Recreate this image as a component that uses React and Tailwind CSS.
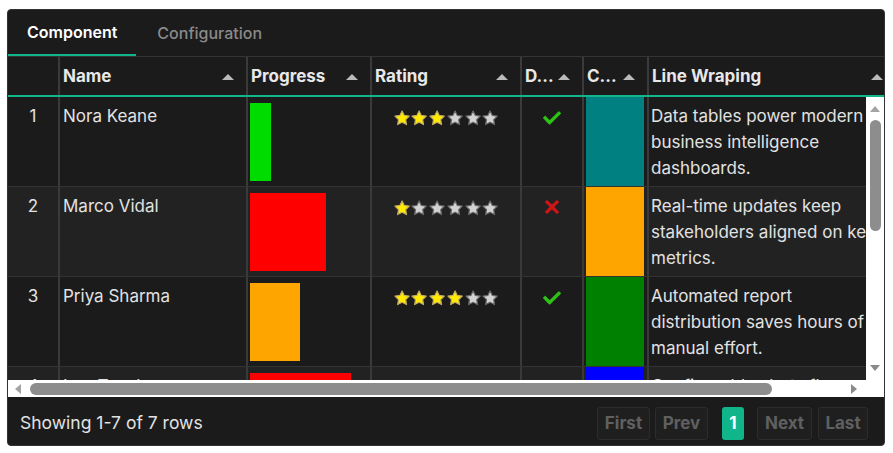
import React from 'react';

const rows = [
    { id: 1, name: 'Nora Keane', progress: 18, pcolor: 'bg-[#00dc00]', rating: 3, done: true, color: 'bg-[#008080]', text: 'Data tables power modern business intelligence dashboards.' },
    { id: 2, name: 'Marco Vidal', progress: 64, pcolor: 'bg-[#ff0000]', rating: 1, done: false, color: 'bg-[#ffa500]', text: 'Real-time updates keep stakeholders aligned on key metrics.' },
    { id: 3, name: 'Priya Sharma', progress: 42, pcolor: 'bg-[#ffa500]', rating: 4, done: true, color: 'bg-[#008000]', text: 'Automated report distribution saves hours of manual effort.' },
    { id: 4, name: 'Leo Tanaka', progress: 85, pcolor: 'bg-[#ff0000]', rating: 2, done: false, color: 'bg-[#0000ff]', text: 'Configurable alerts flag anomalies before they escalate.' },
    { id: 5, name: 'Sofia Brandt', progress: 55, pcolor: 'bg-[#ffa500]', rating: 5, done: true, color: 'bg-[#800080]', text: 'Column filters narrow large datasets in seconds.' },
    { id: 6, name: 'Omar Haddad', progress: 30, pcolor: 'bg-[#00dc00]', rating: 2, done: true, color: 'bg-[#ff0000]', text: 'Exported views can be shared across every team.' },
    { id: 7, name: 'Elena Petrova', progress: 92, pcolor: 'bg-[#ff0000]', rating: 6, done: false, color: 'bg-[#808000]', text: 'Frozen columns keep context while scrolling wide tables.' },
];

// sort arrow in header
const Arrow = () => (
    <span className="shrink-0 w-0 h-0 border-l-[6px] border-r-[6px] border-b-[6px] border-l-transparent border-r-transparent border-b-[#bbbbbb]" />
);

const Star = ({ on }) => (
    <svg width="16" height="16" viewBox="0 0 512 512">
        <polygon
            fill={on ? '#FFEA00' : '#D2D2D2'}
            stroke={on ? '#C1AB60' : '#686868'}
            strokeWidth="37.6152"
            strokeLinecap="round"
            strokeLinejoin="round"
            points="259.216,29.942 330.27,173.919 489.16,197.007 374.185,309.08 401.33,467.31 259.216,392.612 117.104,467.31 144.25,309.08 29.274,197.007 188.165,173.919"
        />
    </svg>
);

const Tick = () => (
    <svg width="18" height="18" viewBox="0 0 24 24">
        <path fill="#2DC214" fillRule="evenodd" d="M21.652,3.211c-0.293-0.295-0.77-0.295-1.061,0L9.41,14.34c-0.293,0.297-0.771,0.297-1.062,0L3.449,9.351C3.304,9.203,3.114,9.13,2.923,9.129C2.73,9.128,2.534,9.201,2.387,9.351l-2.165,1.946C0.078,11.445,0,11.63,0,11.823c0,0.194,0.078,0.397,0.223,0.544l4.94,5.184c0.292,0.296,0.771,0.776,1.062,1.07l2.124,2.141c0.292,0.293,0.769,0.293,1.062,0l14.366-14.34c0.293-0.294,0.293-0.777,0-1.071L21.652,3.211z" />
    </svg>
);

const Cross = () => (
    <svg width="16" height="16" viewBox="0 0 24 24">
        <path fill="#CE1515" d="M22.245,4.015c0.313,0.313,0.313,0.826,0,1.139l-6.276,6.27c-0.313,0.312-0.313,0.826,0,1.14l6.273,6.272c0.313,0.313,0.313,0.826,0,1.14l-2.285,2.277c-0.314,0.312-0.828,0.312-1.142,0l-6.271-6.271c-0.313-0.313-0.828-0.313-1.141,0l-6.276,6.267c-0.313,0.313-0.828,0.313-1.141,0l-2.282-2.28c-0.313-0.313-0.313-0.826,0-1.14l6.278-6.269c0.313-0.312,0.313-0.826,0-1.14L1.709,5.147c-0.314-0.313-0.314-0.827,0-1.14l2.284-2.278C4.308,1.417,4.821,1.417,5.135,1.73L11.405,8c0.314,0.314,0.828,0.314,1.141,0.001l6.276-6.267c0.312-0.312,0.826-0.312,1.141,0L22.245,4.015z" />
    </svg>
);

const HeadCell = ({ w, title, border = true }) => (
    <div className={`${w} shrink-0 h-full flex items-center pl-[3px] pr-[12px] pt-[2px] gap-[4px] ${border ? 'border-r-2 border-[#3a3a3a]' : ''}`}>
        <span className="flex-1 min-w-0 whitespace-nowrap overflow-hidden">{title}</span>
        <Arrow />
    </div>
);

const App = () => {
    return (
        <div className="w-[893px] h-[453px] bg-white pt-[9px] pl-[7px] font-[Inter,sans-serif]">
            <div className="w-[878px] h-[437px] rounded-[4px] border border-[#333333] bg-[#1b1b1b] overflow-hidden flex flex-col">
                {/* tabs */}
                <div className="h-[47px] shrink-0 flex border-b border-[#333333]">
                    <div className="h-full px-[19px] flex items-center border-b-2 border-[#10b58a] text-[16px] font-semibold text-white">
                        Component
                    </div>
                    <div className="h-full px-[21px] flex items-center text-[16px] font-medium text-[#8a8a8a]">
                        Configuration
                    </div>
                </div>

                {/* header */}
                <div className="h-[40px] shrink-0 border-b-2 border-[#10b58a] overflow-hidden">
                    <div className="w-[887px] h-full flex text-[17px] font-bold text-[#e8e8e8]">
                        <div className="w-[52px] shrink-0 h-full border-r-2 border-[#3a3a3a]" />
                        <HeadCell w="w-[188px]" title="Name" />
                        <HeadCell w="w-[124px]" title="Progress" />
                        <HeadCell w="w-[150px]" title="Rating" />
                        <HeadCell w="w-[62px]" title="D..." />
                        <HeadCell w="w-[65px]" title="C..." />
                        <HeadCell w="w-[246px]" title="Line Wraping" border={false} />
                    </div>
                </div>

                {/* body with scrollbars */}
                <div className="h-[283px] shrink-0 flex">
                    <div className="flex-1 min-w-0 overflow-hidden">
                        <div className="w-[887px] text-[17px] leading-[26px] text-[#e2e2e2]">
                            {rows.map((r, i) => (
                                <div key={r.id} className={`h-[90px] flex border-b border-[#333333] ${i % 2 ? 'bg-[#222222]' : 'bg-[#1b1b1b]'}`}>
                                    <div className="w-[52px] shrink-0 border-r-2 border-[#3a3a3a] pt-[6px] text-center">{r.id}</div>
                                    <div className="w-[188px] shrink-0 border-r-2 border-[#3a3a3a] pt-[6px] pl-[3px]">{r.name}</div>
                                    <div className="w-[124px] shrink-0 border-r-2 border-[#3a3a3a] pt-[6px] pl-[2px] pr-[1px]">
                                        <div className={`h-[78px] ${r.pcolor}`} style={{ width: `${r.progress}%` }} />
                                    </div>
                                    <div className="w-[150px] shrink-0 border-r-2 border-[#3a3a3a] pt-[13px] flex justify-center gap-[1.7px]">
                                        {[0, 1, 2, 3, 4, 5].map((s) => (
                                            <Star key={s} on={s < r.rating} />
                                        ))}
                                    </div>
                                    <div className="w-[62px] shrink-0 border-r-2 border-[#3a3a3a] pt-[12px] flex justify-center">
                                        {r.done ? <Tick /> : <Cross />}
                                    </div>
                                    <div className="w-[65px] shrink-0 border-r-2 border-[#3a3a3a] pl-[2px] pr-[3px]">
                                        <div className={`h-full ${r.color}`} />
                                    </div>
                                    <div className="w-[246px] shrink-0 pt-[6px] pl-[2px] pr-[14px]">{r.text}</div>
                                </div>
                            ))}
                        </div>
                    </div>
                    {/* vertical scrollbar */}
                    <div className="w-[18px] shrink-0 bg-white flex flex-col items-center">
                        <span className="mt-[9px] w-0 h-0 border-l-[5px] border-r-[5px] border-b-[6px] border-l-transparent border-r-transparent border-b-[#a3a3a3]" />
                        <div className="mt-[8px] w-[11px] h-[111px] rounded-full bg-[#8d8d8d]" />
                        <div className="flex-1" />
                        <span className="mb-[9px] w-0 h-0 border-l-[5px] border-r-[5px] border-t-[6px] border-l-transparent border-r-transparent border-t-[#8a8a8a]" />
                    </div>
                </div>

                {/* horizontal scrollbar */}
                <div className="h-[17px] shrink-0 bg-white flex items-center">
                    <span className="ml-[7px] w-0 h-0 border-t-[5px] border-b-[5px] border-r-[6px] border-t-transparent border-b-transparent border-r-[#a3a3a3]" />
                    <div className="ml-[9px] w-[742px] h-[12px] rounded-full bg-[#8d8d8d]" />
                    <div className="flex-1" />
                    <span className="mr-[27px] w-0 h-0 border-t-[5px] border-b-[5px] border-l-[6px] border-t-transparent border-b-transparent border-l-[#8a8a8a]" />
                </div>

                {/* footer */}
                <div className="flex-1 flex items-center justify-between pl-[12px] pr-[16px] pt-[4px]">
                    <span className="text-[17.5px] text-[#e2e2e2]">Showing 1-7 of 7 rows</span>
                    <div className="flex items-center text-[17px] font-bold leading-none">
                        <button className="h-[33px] w-[53px] rounded-[3px] border border-[#2c2c2c] bg-[#1f1f1f] text-[#606060]">First</button>
                        <button className="ml-[5px] h-[33px] w-[53px] rounded-[3px] border border-[#2c2c2c] bg-[#1f1f1f] text-[#606060]">Prev</button>
                        <button className="ml-[14px] h-[33px] w-[22px] rounded-[3px] bg-[#10b58a] text-white">1</button>
                        <button className="ml-[13px] h-[33px] w-[55px] rounded-[3px] border border-[#2c2c2c] bg-[#1f1f1f] text-[#606060]">Next</button>
                        <button className="ml-[6px] h-[33px] w-[50px] rounded-[3px] border border-[#2c2c2c] bg-[#1f1f1f] text-[#606060]">Last</button>
                    </div>
                </div>
            </div>
        </div>
    );
};

export default App;
